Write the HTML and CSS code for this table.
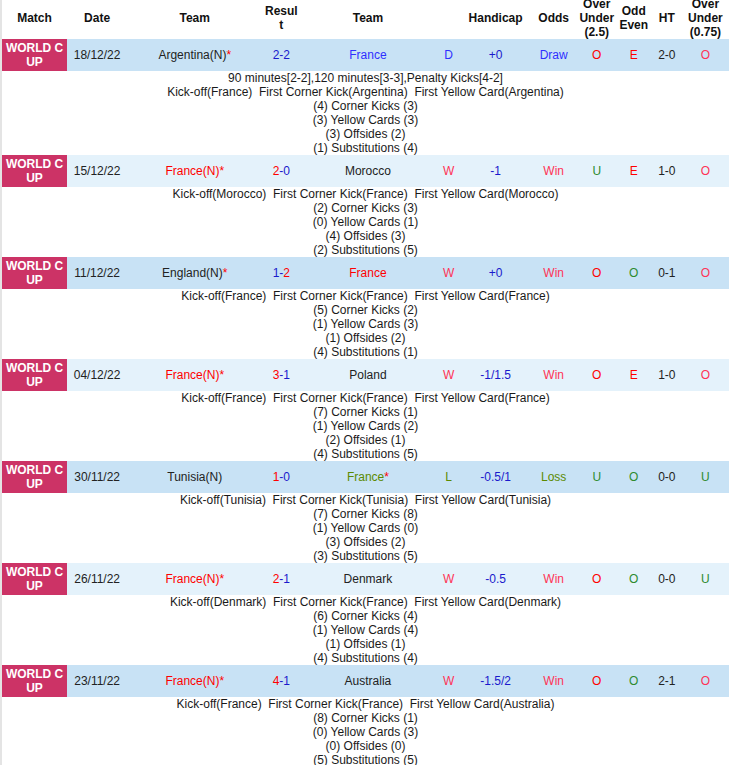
FILE: index.html
```html
<!DOCTYPE html>
<html>
<head>
<meta charset="utf-8">
<link rel="stylesheet" href="styles.css">
</head>
<body>
<div class="wrap">
<table class="matches">
<colgroup>
<col class="c-match"><col class="c-date"><col class="c-team"><col class="c-res"><col class="c-team"><col class="c-wl"><col class="c-hc"><col class="c-odds"><col class="c-ou"><col class="c-oe"><col class="c-ht"><col class="c-ou2">
</colgroup>
<thead>
<tr>
<th><div class="hd">Match</div></th>
<th><div class="hd">Date</div></th>
<th><div class="hd">Team</div></th>
<th><div class="hd brk">Result</div></th>
<th><div class="hd">Team</div></th>
<th><div class="hd"></div></th>
<th><div class="hd">Handicap</div></th>
<th><div class="hd">Odds</div></th>
<th><div class="hd">Over Under (2.5)</div></th>
<th><div class="hd">Odd Even</div></th>
<th><div class="hd">HT</div></th>
<th><div class="hd">Over Under (0.75)</div></th>
</tr>
</thead>
<tbody>
<tr class="row dark">
<td class="league">WORLD CUP</td>
<td>18/12/22</td>
<td>Argentina(N)<span class="red">*</span></td>
<td><span class="blue">2-2</span></td>
<td><span class="blue2">France</span></td>
<td class="blue2">D</td>
<td class="blue">+0</td>
<td class="blue2">Draw</td>
<td class="red">O</td>
<td class="red">E</td>
<td>2-0</td>
<td class="pink">O</td>
</tr>
<tr><td colspan="12" class="detail">90 minutes[2-2],120 minutes[3-3],Penalty Kicks[4-2]<br>Kick-off(France)&nbsp; First Corner Kick(Argentina)&nbsp; First Yellow Card(Argentina)<br>(4) Corner Kicks (3)<br>(3) Yellow Cards (3)<br>(3) Offsides (2)<br>(1) Substitutions (4)</td></tr>

<tr class="row light">
<td class="league">WORLD CUP</td>
<td>15/12/22</td>
<td><span class="red">France(N)*</span></td>
<td><span class="red">2</span><span class="blue">-0</span></td>
<td>Morocco</td>
<td class="pink">W</td>
<td class="blue">-1</td>
<td class="pink">Win</td>
<td class="green">U</td>
<td class="red">E</td>
<td>1-0</td>
<td class="pink">O</td>
</tr>
<tr><td colspan="12" class="detail">Kick-off(Morocco)&nbsp; First Corner Kick(France)&nbsp; First Yellow Card(Morocco)<br>(2) Corner Kicks (3)<br>(0) Yellow Cards (1)<br>(4) Offsides (3)<br>(2) Substitutions (5)</td></tr>

<tr class="row dark">
<td class="league">WORLD CUP</td>
<td>11/12/22</td>
<td>England(N)<span class="red">*</span></td>
<td><span class="blue">1-</span><span class="red">2</span></td>
<td><span class="red">France</span></td>
<td class="pink">W</td>
<td class="blue">+0</td>
<td class="pink">Win</td>
<td class="red">O</td>
<td class="green">O</td>
<td>0-1</td>
<td class="pink">O</td>
</tr>
<tr><td colspan="12" class="detail">Kick-off(France)&nbsp; First Corner Kick(France)&nbsp; First Yellow Card(France)<br>(5) Corner Kicks (2)<br>(1) Yellow Cards (3)<br>(1) Offsides (2)<br>(4) Substitutions (1)</td></tr>

<tr class="row light">
<td class="league">WORLD CUP</td>
<td>04/12/22</td>
<td><span class="red">France(N)*</span></td>
<td><span class="red">3</span><span class="blue">-1</span></td>
<td>Poland</td>
<td class="pink">W</td>
<td class="blue">-1/1.5</td>
<td class="pink">Win</td>
<td class="red">O</td>
<td class="red">E</td>
<td>1-0</td>
<td class="pink">O</td>
</tr>
<tr><td colspan="12" class="detail">Kick-off(France)&nbsp; First Corner Kick(France)&nbsp; First Yellow Card(France)<br>(7) Corner Kicks (1)<br>(1) Yellow Cards (2)<br>(2) Offsides (1)<br>(4) Substitutions (5)</td></tr>

<tr class="row dark">
<td class="league">WORLD CUP</td>
<td>30/11/22</td>
<td>Tunisia(N)</td>
<td><span class="red">1</span><span class="blue">-0</span></td>
<td><span class="olive">France</span><span class="red">*</span></td>
<td class="olive">L</td>
<td class="blue">-0.5/1</td>
<td class="olive">Loss</td>
<td class="green">U</td>
<td class="green">O</td>
<td>0-0</td>
<td class="green">U</td>
</tr>
<tr><td colspan="12" class="detail">Kick-off(Tunisia)&nbsp; First Corner Kick(Tunisia)&nbsp; First Yellow Card(Tunisia)<br>(7) Corner Kicks (8)<br>(1) Yellow Cards (0)<br>(3) Offsides (2)<br>(3) Substitutions (5)</td></tr>

<tr class="row light">
<td class="league">WORLD CUP</td>
<td>26/11/22</td>
<td><span class="red">France(N)*</span></td>
<td><span class="red">2</span><span class="blue">-1</span></td>
<td>Denmark</td>
<td class="pink">W</td>
<td class="blue">-0.5</td>
<td class="pink">Win</td>
<td class="red">O</td>
<td class="green">O</td>
<td>0-0</td>
<td class="green">U</td>
</tr>
<tr><td colspan="12" class="detail">Kick-off(Denmark)&nbsp; First Corner Kick(France)&nbsp; First Yellow Card(Denmark)<br>(6) Corner Kicks (4)<br>(1) Yellow Cards (4)<br>(1) Offsides (1)<br>(4) Substitutions (4)</td></tr>

<tr class="row dark">
<td class="league">WORLD CUP</td>
<td>23/11/22</td>
<td><span class="red">France(N)*</span></td>
<td><span class="red">4</span><span class="blue">-1</span></td>
<td>Australia</td>
<td class="pink">W</td>
<td class="blue">-1.5/2</td>
<td class="pink">Win</td>
<td class="red">O</td>
<td class="green">O</td>
<td>2-1</td>
<td class="pink">O</td>
</tr>
<tr><td colspan="12" class="detail">Kick-off(France)&nbsp; First Corner Kick(France)&nbsp; First Yellow Card(Australia)<br>(8) Corner Kicks (1)<br>(0) Yellow Cards (3)<br>(0) Offsides (0)<br>(5) Substitutions (5)</td></tr>
</tbody>
</table>
</div>
</body>
</html>
```
FILE: styles.css
```css
html, body {
  margin: 0;
  padding: 0;
  background: #fff;
}
body {
  font-family: "Liberation Sans", Arial, sans-serif;
  font-size: 12px;
  color: #222;
}
.wrap {
  border-left: 2px solid #e4e4e4;
  width: 727px;
}
.matches {
  border-collapse: collapse;
  table-layout: fixed;
  width: 727px;
}
.c-match { width: 65px; }
.c-date { width: 60px; }
.c-team { width: 135px; }
.c-res { width: 38px; }
.c-wl { width: 26px; }
.c-hc { width: 68px; }
.c-odds { width: 48px; }
.c-ou { width: 38px; }
.c-oe { width: 36px; }
.c-ht { width: 30px; }
.c-ou2 { width: 47px; }

th {
  padding: 0;
  height: 39px;
  font-weight: bold;
  color: #111;
  text-align: center;
  vertical-align: top;
}
.hd {
  height: 35px;
  display: flex;
  align-items: center;
  justify-content: center;
  line-height: 14px;
  padding: 0 1px;
  text-align: center;
}
.brk {
  word-break: break-all;
  padding: 0 2px;
}
td {
  padding: 0;
  text-align: center;
  vertical-align: middle;
  white-space: nowrap;
}
.row td {
  height: 32px;
  line-height: 14px;
}
.row.dark td { background: #c8e2f5; }
.row.light td { background: #e4f2fb; }
.row td.league {
  background: #cc3366;
  color: #fff;
  font-weight: bold;
  white-space: normal;
  word-break: break-all;
  padding: 0 2px;
}
.detail {
  background: #fff;
  line-height: 14px;
  color: #1a1a1a;
}
.red { color: #ff0000; }
.pink { color: #ff3355; }
.blue { color: #1a1acc; }
.blue2 { color: #2f2fff; }
.green { color: #2e8b2e; }
.olive { color: #5c8a00; }
```
